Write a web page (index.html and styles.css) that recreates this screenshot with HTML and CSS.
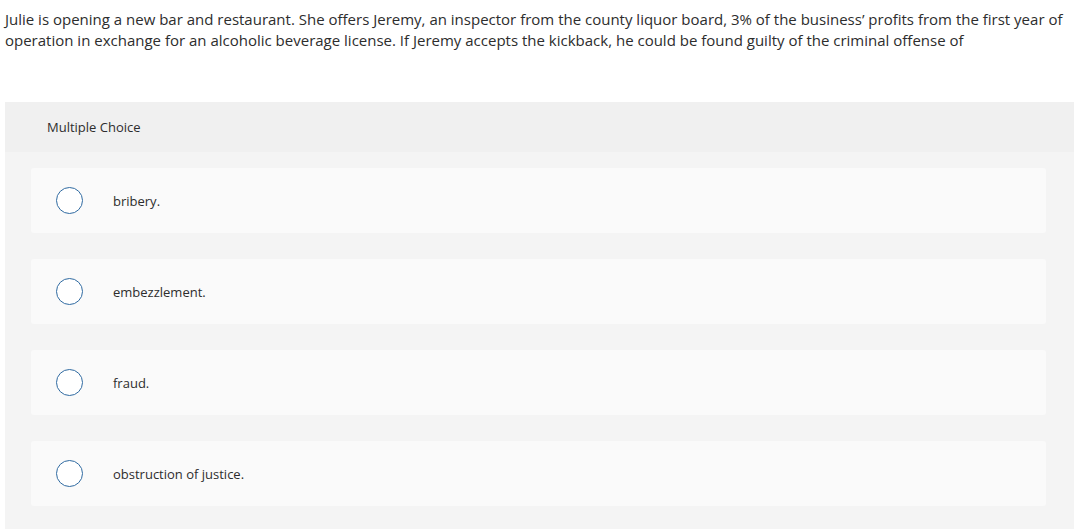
FILE: index.html
```html
<!DOCTYPE html>
<html>
<head>
<meta charset="utf-8">
<link rel="stylesheet" href="styles.css">
</head>
<body>
<div class="question">Julie is opening a new bar and restaurant. She offers Jeremy, an inspector from the county liquor board, 3% of the business’ profits from the first year of operation in exchange for an alcoholic beverage license. If Jeremy accepts the kickback, he could be found guilty of the criminal offense of</div>
<div class="panel">
  <div class="panel-head">Multiple Choice</div>
  <div class="panel-body">
    <div class="option"><span class="radio"></span><span class="label">bribery.</span></div>
    <div class="option"><span class="radio"></span><span class="label">embezzlement.</span></div>
    <div class="option"><span class="radio"></span><span class="label">fraud.</span></div>
    <div class="option"><span class="radio"></span><span class="label">obstruction of justice.</span></div>
  </div>
</div>
</body>
</html>
```
FILE: styles.css
```css
html, body { margin: 0; padding: 0; background: #fff; }
body { font-family: "Open Sans", Lato, sans-serif; color: #2d2d2d; }
.question {
  padding: 9px 20px 0 5px;
  font-size: 15px;
  line-height: 21px;
  height: 93px;
  box-sizing: border-box;
}
.panel {
  margin: 9px 14px 0 5px;
  background: #f4f4f4;
}
.panel-head {
  background: #f0f0f0;
  height: 50px;
  display: flex;
  align-items: center;
  padding-left: 42px;
  font-size: 13px;
}
.panel-body {
  padding: 16px 28px 23px 26px;
  display: flex;
  flex-direction: column;
  gap: 26px;
}
.option {
  background: #fafafa;
  border-radius: 3px;
  height: 65px;
  display: flex;
  align-items: center;
  padding-left: 25px;
}
.radio {
  width: 25px;
  height: 25px;
  border: 1.5px solid #2f6aa1;
  border-radius: 50%;
  background: #fff;
  flex: none;
}
.label {
  margin-left: 30px;
  font-size: 13px;
}
```
